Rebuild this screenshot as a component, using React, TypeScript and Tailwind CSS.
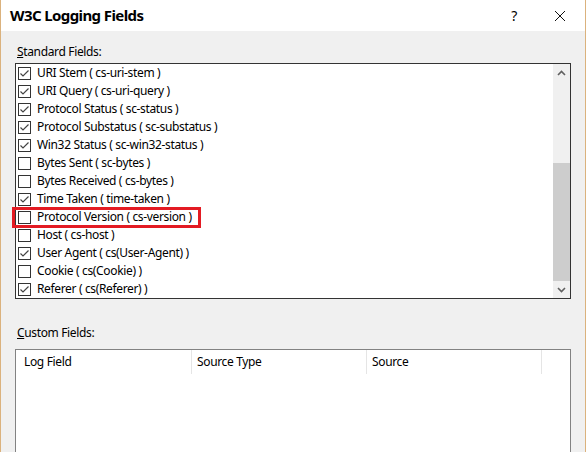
const fields = [
  { label: "URI Stem ( cs-uri-stem )", checked: true },
  { label: "URI Query ( cs-uri-query )", checked: true },
  { label: "Protocol Status ( sc-status )", checked: true },
  { label: "Protocol Substatus ( sc-substatus )", checked: true },
  { label: "Win32 Status ( sc-win32-status )", checked: true },
  { label: "Bytes Sent ( sc-bytes )", checked: false },
  { label: "Bytes Received ( cs-bytes )", checked: false },
  { label: "Time Taken ( time-taken )", checked: true },
  { label: "Protocol Version ( cs-version )", checked: false },
  { label: "Host ( cs-host )", checked: false },
  { label: "User Agent ( cs(User-Agent) )", checked: true },
  { label: "Cookie ( cs(Cookie) )", checked: false },
  { label: "Referer ( cs(Referer) )", checked: true },
];

const CheckBox = ({ checked }: { checked: boolean }) => (
  <span className="w-[13px] h-[13px] border border-[#333333] bg-white flex items-center justify-center shrink-0">
    {checked && (
      <svg width="11" height="11" viewBox="0 0 11 11">
        <path d="M1.5 5.5 L4 8 L9.5 2.5" fill="none" stroke="#444444" strokeWidth="1.2" />
      </svg>
    )}
  </span>
);

const App = () => {
  return (
    <div
      className="w-[586px] h-[452px] overflow-hidden flex flex-col border-x border-[#dbb27d] text-black text-[12px] tracking-[-0.35px]"
      style={{ fontFamily: '"Noto Sans", sans-serif' }}
    >
      <div className="h-[31px] bg-white flex items-center shrink-0">
        <span className="pl-[9px] text-[15px] font-bold tracking-[-0.6px]">W3C Logging Fields</span>
        <span className="ml-auto w-[20px] text-center text-[14px]">?</span>
        <span className="ml-[26px] mr-[15px] w-[20px] flex justify-center">
          <svg width="12" height="12" viewBox="0 0 12 12">
            <path d="M1 1 L11 11 M11 1 L1 11" stroke="#111" strokeWidth="1" />
          </svg>
        </span>
      </div>

      <div className="flex-1 bg-[#f0f0f0] px-[14px] pt-[13px]">
        <div className="pl-[2px] h-[19px] leading-[16px]">
          <span className="underline">S</span>tandard Fields:
        </div>
        <div className="relative h-[236px] border border-[#333333] bg-white flex">
          <div className="flex-1 flex flex-col">
            {fields.map((f) => (
              <div key={f.label} className="h-[18px] flex items-center pl-[2px] gap-[6px]">
                <CheckBox checked={f.checked} />
                <span className="leading-[16px] whitespace-nowrap">{f.label}</span>
              </div>
            ))}
          </div>
          <div className="w-[17px] bg-[#f0f0f0] flex flex-col">
            <div className="h-[17px] flex items-center justify-center">
              <svg width="9" height="6" viewBox="0 0 9 6">
                <path d="M1 5 L4.5 1.5 L8 5" fill="none" stroke="#606060" strokeWidth="1.6" />
              </svg>
            </div>
            <div className="h-[82px]" />
            <div className="h-[118px] bg-[#cdcdcd]" />
            <div className="flex-1 flex items-center justify-center">
              <svg width="9" height="6" viewBox="0 0 9 6">
                <path d="M1 1 L4.5 4.5 L8 1" fill="none" stroke="#606060" strokeWidth="1.6" />
              </svg>
            </div>
          </div>
          <span className="absolute left-[-4px] top-[143px] w-[189px] h-[21px] border-[3px] border-[#e31b23]" />
        </div>

        <div className="pl-[2px] pt-[26px] h-[50px] leading-[16px]">
          <span className="underline">C</span>ustom Fields:
        </div>
        <div className="h-[120px] border border-[#828282] bg-white">
          <div className="flex h-[24px]">
            <div className="w-[176px] pl-[8px] flex items-center border-r border-[#e5e5e5]">Log Field</div>
            <div className="w-[175px] pl-[5px] flex items-center border-r border-[#e5e5e5]">Source Type</div>
            <div className="w-[175px] pl-[5px] flex items-center border-r border-[#e5e5e5]">Source</div>
          </div>
        </div>
      </div>
    </div>
  );
};

export default App;
